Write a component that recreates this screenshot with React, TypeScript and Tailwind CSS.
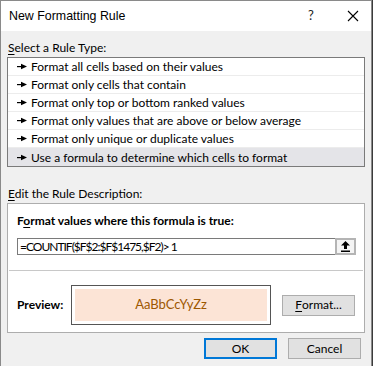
import React from "react";

const rules = [
  "Format all cells based on their values",
  "Format only cells that contain",
  "Format only top or bottom ranked values",
  "Format only values that are above or below average",
  "Format only unique or duplicate values",
  "Use a formula to determine which cells to format",
];

function Pointer() {
  return (
    <svg width="10" height="7" viewBox="0 0 10 7" className="shrink-0">
      <rect x="0" y="3" width="5" height="1.2" fill="#000" />
      <polygon points="4,0.8 10,3.6 4,6.2" fill="#000" />
    </svg>
  );
}

function UploadIcon() {
  return (
    <svg width="9" height="11" viewBox="0 0 9 11">
      <polygon points="4.5,0 9,4.5 6,4.5 6,8 3,8 3,4.5 0,4.5" fill="#000" />
      <rect x="0" y="9.5" width="9" height="1.5" fill="#000" />
    </svg>
  );
}

export default function App() {
  return (
    <div
      className="w-[373px] h-[366px] overflow-hidden bg-[#3b3b3b] text-[12px] text-black"
      style={{ fontFamily: '"Segoe UI", Lato, "Liberation Sans", sans-serif' }}
    >
      <div className="w-[372px] h-[366px] bg-[#f0f0f0] border-l border-r border-t border-[#8a8a8a] flex flex-col">
        {/* title bar */}
        <div className="h-[30px] bg-white flex items-center pl-[8px] shrink-0">
          <span className="text-[12.4px] flex-1" style={{ fontFamily: '"Liberation Sans", sans-serif' }}>
            New Formatting Rule
          </span>
          <span className="w-[20px] text-center text-[13px] mr-[26px] text-[#222]">?</span>
          <svg width="12" height="12" viewBox="0 0 12 12" className="mr-[12px]">
            <path d="M1 1 L11 11 M11 1 L1 11" stroke="#000" strokeWidth="1.1" />
          </svg>
        </div>

        <div className="px-[6px] flex flex-col">
          <div className="mt-[9px] h-[16px] leading-[16px] pl-[1px]">
            <u className="underline-offset-2">S</u>elect a Rule Type:
          </div>
          <div className="mt-[1px] w-[358px] border border-[#7a7a7a] bg-white">
            {rules.map((r, i) => (
              <div
                key={r}
                className={`h-[18px] flex items-center gap-[4px] pl-[9px] ${
                  i === rules.length - 1 ? "bg-[#e4e4e8]" : "border-b border-[#ececec]"
                }`}
              >
                <Pointer />
                <span className="leading-[18px] pt-[1px]">{r}</span>
              </div>
            ))}
          </div>

          <div className="mt-[19px] h-[16px] leading-[16px] pl-[1px]">
            <u className="underline-offset-2">E</u>dit the Rule Description:
          </div>
          <div className="mt-[1px] w-[358px] h-[130px] border border-[#adadad] bg-white flex flex-col">
            <div className="pl-[9px] pr-[8px] pt-[9px]">
              <div className="font-bold h-[16px] leading-[16px]">
                F<u className="underline-offset-2">o</u>rmat values where this formula is true:
              </div>
              <div className="mt-[9px] h-[17px] border border-[#7a7a7a] flex items-center">
                <span className="flex-1 pl-[2px] tracking-[-1px]">=COUNTIF($F$2:$F$1475,$F2)&gt; 1</span>
                <div className="w-[21px] h-[17px] -mr-[1px] border-2 border-[#b4b4b4] bg-[#f4f4f4] flex items-center justify-center">
                  <UploadIcon />
                </div>
              </div>
            </div>
            <div className="mt-[15px] mx-[1px] border-t border-[#c8c8c8]" />
            <div className="flex items-center pl-[9px] mt-[14px]">
              <span className="font-bold w-[54px]">Preview:</span>
              <div className="w-[200px] h-[40px] border border-[#555] p-[3px] bg-white">
                <div className="h-full bg-[#fce4d6] flex items-center justify-center text-[#9c5700] text-[13px]">
                  AaBbCcYyZz
                </div>
              </div>
              <div className="ml-[11px] w-[73px] h-[21px] border border-[#adadad] bg-[#e1e1e1] flex items-center justify-center">
                <u className="underline-offset-2">F</u>ormat...
              </div>
            </div>
          </div>

          <div className="flex justify-end gap-[11px] mt-[5px] pr-[4px]">
            <div className="w-[73px] h-[21px] border-2 border-[#0078d7] bg-[#e1e1e1] flex items-center justify-center">
              OK
            </div>
            <div className="w-[73px] h-[21px] border border-[#adadad] bg-[#e1e1e1] flex items-center justify-center">
              Cancel
            </div>
          </div>
        </div>
      </div>
    </div>
  );
}
